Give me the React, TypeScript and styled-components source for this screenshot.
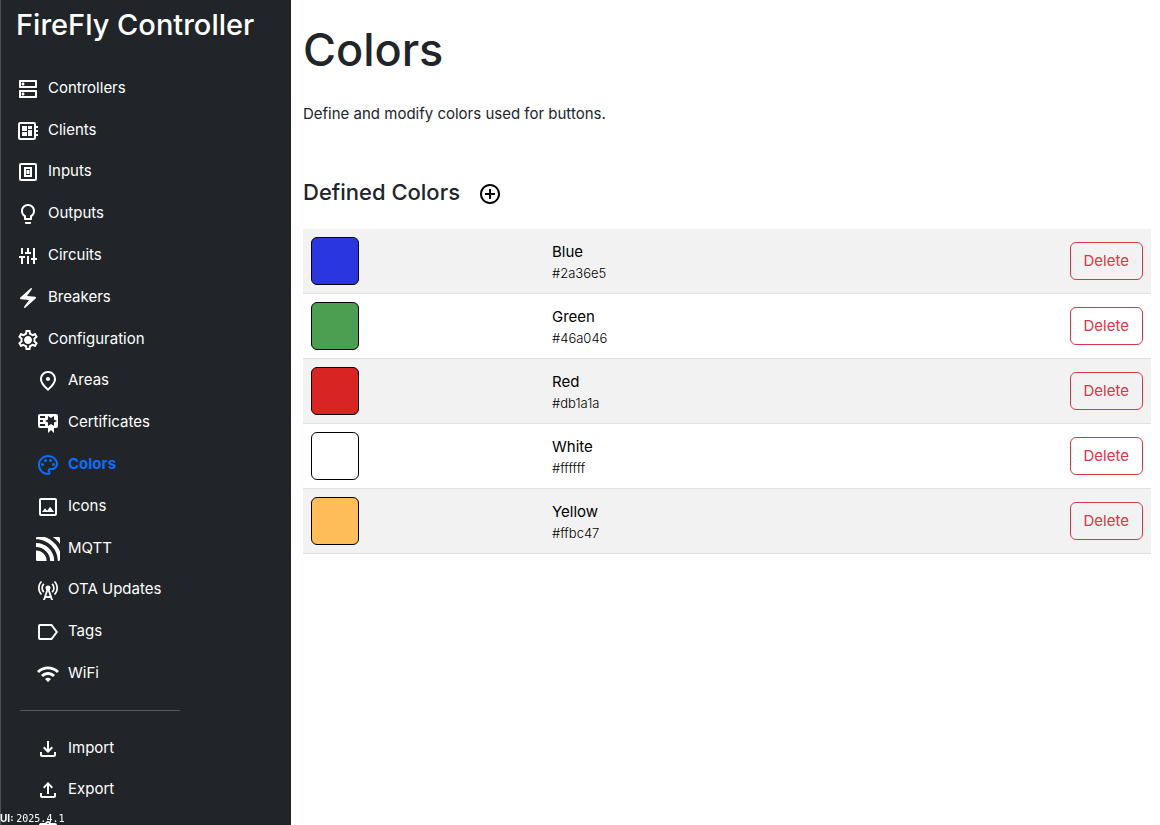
import React from "react";
import styled, { createGlobalStyle } from "styled-components";
import {
  MdAddCircleOutline,
  MdLightbulbOutline,
  MdOutlineAssignment,
  MdOutlineCellTower,
  MdOutlineDeveloperBoard,
  MdOutlineDns,
  MdOutlineElectricBolt,
  MdOutlineFileDownload,
  MdOutlineFileUpload,
  MdOutlineImage,
  MdOutlinePalette,
  MdOutlinePlace,
  MdOutlineSettings,
  MdWifi,
} from "react-icons/md";
import { SiMqtt } from "react-icons/si";

const Global = createGlobalStyle`
  *, *::before, *::after { box-sizing: border-box; }
  body { margin: 0; font-family: Inter, "Liberation Sans", sans-serif; font-size: 15px; line-height: 24px; color: #212529; background: #fff; }
  h1, h2, p, ul { margin: 0; padding: 0; }
`;

const Page = styled.div`
  display: flex;
  height: 100vh;
  overflow: hidden;
`;

const Sidebar = styled.aside`
  flex: 0 0 calc(25% + 1px);
  min-width: 240px;
  padding: 4px 15px 0;
  border-left: 1px solid #495057;
  background: #212529;
  color: #fff;
`;

const Brand = styled.div`
  font-size: 29px;
  line-height: 42px;
  font-weight: 500;
  white-space: nowrap;
`;

const NavList = styled.ul<{ $height: number }>`
  display: grid;
  grid-auto-rows: 1fr;
  min-height: ${(p) => p.$height}px;
  list-style: none;
`;

const MainNav = styled(NavList)`
  margin-top: 21px;
`;

const NavLink = styled.a<{ $nested?: boolean; $active?: boolean }>`
  display: flex;
  align-items: center;
  gap: 8px;
  height: 100%;
  padding-left: ${(p) => (p.$nested ? 20 : 0)}px;
  color: ${(p) => (p.$active ? "#0d6efd" : "#fff")};
  font-weight: ${(p) => (p.$active ? 700 : 400)};
  text-decoration: none;

  svg { flex: none; width: 24px; height: 24px; margin-top: 2px; }
`;

const Divider = styled.hr`
  width: 160px;
  margin: 16px 4px;
  border: 0;
  border-top: 1px solid #575b5f;
`;

const Version = styled.div`
  position: fixed;
  left: 0;
  bottom: 0;
  font-size: 10px;
  line-height: 12px;
  color: #fff;
`;

const Mono = styled.span`
  font-family: "DejaVu Sans Mono", monospace;
`;

const Main = styled.main`
  flex: 1;
  padding: 20px 9px 0 12px;
`;

const Title = styled.h1`
  font-size: 45px;
  line-height: 60px;
  font-weight: 500;
`;

const Intro = styled.p`
  margin-top: 22px;
`;

const SectionHead = styled.div`
  display: flex;
  align-items: center;
  gap: 18px;
  margin-top: 51px;
`;

const SectionTitle = styled.h2`
  font-size: 22px;
  line-height: 30px;
  font-weight: 500;
`;

const AddButton = styled.button`
  display: flex;
  padding: 0;
  margin-top: 4px;
  border: 0;
  background: none;
  color: #000;
`;

const Table = styled.table`
  width: 100%;
  margin-top: 22px;
  border-collapse: separate;
  border-spacing: 0;
  table-layout: fixed;
`;

const Row = styled.tr`
  &:nth-child(odd) { background: #f2f2f2; }
`;

const Cell = styled.td<{ $width?: string; $end?: boolean }>`
  width: ${(p) => p.$width ?? "auto"};
  height: 65px;
  padding: 8px;
  border-bottom: 1px solid #dee2e6;
  text-align: ${(p) => (p.$end ? "right" : "left")};
  color: #000;
`;

const Swatch = styled.div<{ $color: string }>`
  width: 48px;
  height: 48px;
  border: 1px solid #000;
  border-radius: 6px;
  background: ${(p) => p.$color};
`;

const Name = styled.div`
  line-height: 24px;
`;

const Hex = styled.div`
  font-size: 13px;
  line-height: 18px;
  font-weight: 300;
`;

const DeleteButton = styled.button`
  height: 38px;
  padding: 0 13px;
  border: 1px solid #dc3545;
  border-radius: 6px;
  background: transparent;
  color: #dc3545;
  font: inherit;
  vertical-align: middle;
`;

const SwitchIcon = () => (
  <svg viewBox="0 0 24 24" fill="none" stroke="currentColor" strokeWidth="2">
    <rect x="4" y="4" width="16" height="16" rx="1" />
    <path d="M9 8h6v8H9zM11.500 11h1v2h-1z" />
  </svg>
);

const SlidersIcon = () => (
  <svg viewBox="0 0 24 24" fill="currentColor">
    <path d="M5 4h2v6H5zM3 12h6v2H7v6H5v-6H3zM11 4h2v4h2v2H9V8h2zM11 12h2v8h-2zM17 4h2v10h-2zM15 14h6v2h-2v4h-2v-4h-2z" />
  </svg>
);

const GearIcon = () => (
  <svg viewBox="0 0 24 24">
    <MdOutlineSettings x="0" y="0" width="24" height="24" style={undefined} />
    <circle cx="12" cy="12" r="3" fill="currentColor" />
  </svg>
);

const CertificateIcon = () => (
  <svg viewBox="0 0 24 24" fill="currentColor">
    <path d="M4 3C2.890 3 2 3.890 2 5v10a2 2 0 0 0 2 2h8v5l3-3 3 3v-5h2a2 2 0 0 0 2-2V5a2 2 0 0 0-2-2H4m8 2 3 2 3-2v3.500l3 1.500-3 1.500V15l-3-2-3 2v-3.500L9 10l3-1.500V5M4 5h5v2H4V5m0 4h3v2H4V9m0 4h5v2H4v-2Z" />
  </svg>
);

const TagIcon = () => (
  <svg viewBox="0 0 24 24" fill="none" stroke="currentColor" strokeWidth="2">
    <path d="M4 5h11.500L20.800 12l-5.300 7H4a1 1 0 0 1-1-1V6a1 1 0 0 1 1-1z" />
  </svg>
);

type Item = { label: string; icon: React.ElementType; nested?: boolean; active?: boolean };

const items: Item[] = [
  { label: "Controllers", icon: MdOutlineDns },
  { label: "Clients", icon: MdOutlineDeveloperBoard },
  { label: "Inputs", icon: SwitchIcon },
  { label: "Outputs", icon: MdLightbulbOutline },
  { label: "Circuits", icon: SlidersIcon },
  { label: "Breakers", icon: MdOutlineElectricBolt },
  { label: "Configuration", icon: GearIcon },
  { label: "Areas", icon: MdOutlinePlace, nested: true },
  { label: "Certificates", icon: CertificateIcon, nested: true },
  { label: "Colors", icon: MdOutlinePalette, nested: true, active: true },
  { label: "Icons", icon: MdOutlineImage, nested: true },
  { label: "MQTT", icon: SiMqtt, nested: true },
  { label: "OTA Updates", icon: MdOutlineCellTower, nested: true },
  { label: "Tags", icon: TagIcon, nested: true },
  { label: "WiFi", icon: MdWifi, nested: true },
];

const tools: Item[] = [
  { label: "Import", icon: MdOutlineFileDownload, nested: true },
  { label: "Export", icon: MdOutlineFileUpload, nested: true },
  { label: "Events", icon: MdOutlineAssignment, nested: true },
];

const colors = [
  { name: "Blue", hex: "#2a36e5", fill: "#2a36df" },
  { name: "Green", hex: "#46a046", fill: "#4c9f50" },
  { name: "Red", hex: "#db1a1a", fill: "#d92424" },
  { name: "White", hex: "#ffffff", fill: "#ffffff" },
  { name: "Yellow", hex: "#ffbc47", fill: "#ffbd59" },
];

const renderItem = ({ label, icon: Icon, nested, active }: Item) => (
  <li key={label}>
    <NavLink href="#" $nested={nested} $active={active}>
      <Icon />
      {label}
    </NavLink>
  </li>
);

export default function App() {
  return (
    <Page>
      <Global />
      <Sidebar>
        <Brand>FireFly Controller</Brand>
        <nav>
          <MainNav $height={627}>{items.map(renderItem)}</MainNav>
          <Divider />
          <NavList $height={125}>{tools.map(renderItem)}</NavList>
        </nav>
        <Version>
          <b>UI:</b> <Mono>2025.4.1</Mono>
        </Version>
      </Sidebar>
      <Main>
        <Title>Colors</Title>
        <Intro>Define and modify colors used for buttons.</Intro>
        <SectionHead>
          <SectionTitle>Defined Colors</SectionTitle>
          <AddButton aria-label="Add color">
            <MdAddCircleOutline size={24} />
          </AddButton>
        </SectionHead>
        <Table>
          <tbody>
            {colors.map((c) => (
              <Row key={c.name}>
                <Cell $width="241px"><Swatch $color={c.fill} /></Cell>
                <Cell>
                  <Name>{c.name}</Name>
                  <Hex>{c.hex}</Hex>
                </Cell>
                <Cell $end><DeleteButton>Delete</DeleteButton></Cell>
              </Row>
            ))}
          </tbody>
        </Table>
      </Main>
    </Page>
  );
}
